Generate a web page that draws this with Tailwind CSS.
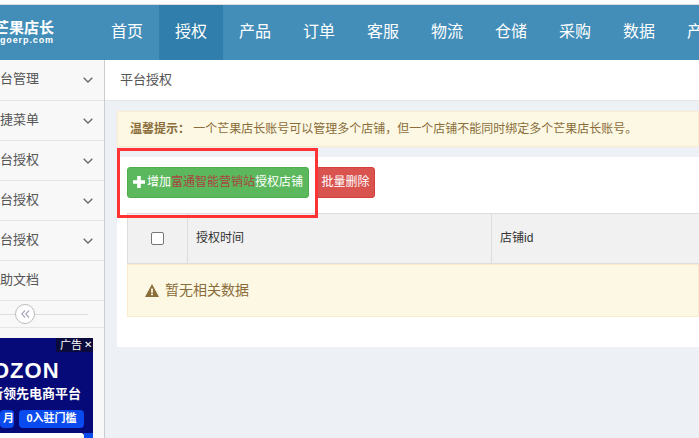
<!DOCTYPE html>
<html lang="zh-CN">
<head>
  <meta charset="UTF-8" />
  <title>平台授权</title>
  <script src="https://cdn.jsdelivr.net/npm/@tailwindcss/browser@4"></script>
</head>
<body class="relative w-[699px] h-[438px] overflow-hidden bg-[#edf0f5] font-['Liberation_Sans','Noto_Sans_CJK_SC',sans-serif] text-[13px] text-[#555]">

  <!-- top strip -->
  <div class="h-[5px] bg-white border-b border-[#ddd]"></div>

  <!-- nav -->
  <header class="flex h-[55px] bg-[#438eb9] text-white">
    <div class="flex flex-col items-end w-[54px] mr-[41px] shrink-0 pt-[14px]">
      <div class="text-[15px] leading-[17px] font-bold whitespace-nowrap">芒果店长</div>
      <div class="text-[9px] leading-[10px] mt-[-1px] font-bold tracking-[0.9px] whitespace-nowrap">mangoerp.com</div>
    </div>
    <nav class="flex text-base leading-[53px] whitespace-nowrap">
      <a class="w-16 h-[55px] text-center">首页</a>
      <a class="w-16 h-[55px] text-center bg-[#307eab]">授权</a>
      <a class="w-16 h-[55px] text-center">产品</a>
      <a class="w-16 h-[55px] text-center">订单</a>
      <a class="w-16 h-[55px] text-center">客服</a>
      <a class="w-16 h-[55px] text-center">物流</a>
      <a class="w-16 h-[55px] text-center">仓储</a>
      <a class="w-16 h-[55px] text-center">采购</a>
      <a class="w-16 h-[55px] text-center">数据</a>
      <a class="w-16 h-[55px] text-center">产品</a>
    </nav>
  </header>

  <div class="flex h-[378px]">
    <!-- sidebar -->
    <aside class="w-[105px] shrink-0 bg-[#f8f8f8] border-r border-[#ccc] overflow-hidden">
      <ul>
        <li class="flex items-center justify-between h-[41px] border-b border-[#e5e5e5] pr-[11px]"><span class="ml-[-13px] mb-[2px]">平台管理</span><svg class="w-[10px] h-[6px]" viewBox="0 0 10 6" fill="none" stroke="#666" stroke-width="1.3"><path d="M.7.7 5 5 9.3.7"/></svg></li>
        <li class="flex items-center justify-between h-10 border-b border-[#e5e5e5] pr-[11px]"><span class="ml-[-13px] mb-[2px]">快捷菜单</span><svg class="w-[10px] h-[6px]" viewBox="0 0 10 6" fill="none" stroke="#666" stroke-width="1.3"><path d="M.7.7 5 5 9.3.7"/></svg></li>
        <li class="flex items-center justify-between h-10 border-b border-[#e5e5e5] pr-[11px]"><span class="ml-[-13px] mb-[2px]">平台授权</span><svg class="w-[10px] h-[6px]" viewBox="0 0 10 6" fill="none" stroke="#666" stroke-width="1.3"><path d="M.7.7 5 5 9.3.7"/></svg></li>
        <li class="flex items-center justify-between h-10 border-b border-[#e5e5e5] pr-[11px]"><span class="ml-[-13px] mb-[2px]">平台授权</span><svg class="w-[10px] h-[6px]" viewBox="0 0 10 6" fill="none" stroke="#666" stroke-width="1.3"><path d="M.7.7 5 5 9.3.7"/></svg></li>
        <li class="flex items-center justify-between h-10 border-b border-[#e5e5e5] pr-[11px]"><span class="ml-[-13px] mb-[2px]">平台授权</span><svg class="w-[10px] h-[6px]" viewBox="0 0 10 6" fill="none" stroke="#666" stroke-width="1.3"><path d="M.7.7 5 5 9.3.7"/></svg></li>
        <li class="flex items-center h-10 border-b border-[#e5e5e5]"><span class="ml-[-13px] mb-[2px]">帮助文档</span></li>
      </ul>
      <!-- collapse -->
      <div class="relative h-[27px] border-b border-[#e5e5e5] pl-[15px] pt-[3px]">
        <div class="absolute left-0 w-[88px] top-[13px] h-px bg-[#ddd]"></div>
        <div class="relative w-5 h-5 rounded-full bg-white border border-[#bbb] flex items-center justify-center">
          <svg class="w-[9px] h-[8px]" viewBox="0 0 9 8" fill="none" stroke="#aab" stroke-width="1.2"><path d="M4 .5.8 4 4 7.5M8 .5 4.8 4 8 7.5"/></svg>
        </div>
      </div>
      <!-- ad -->
      <div class="relative w-[93px] h-[100px] mt-[10px] bg-[#050a78] overflow-hidden text-white">
        <div class="absolute right-0 top-0 flex items-center gap-[2px] h-[14px] pl-[4px] pr-[1px] bg-[#0a0a3c] text-[11px] leading-none"><span>广告</span><span class="text-[10px]">✕</span></div>
        <div class="mt-[22px] ml-[-8px] text-[22px] leading-[22px] font-bold tracking-[1px]">OZON</div>
        <div class="mt-[4px] ml-[-10px] text-[13px] leading-[16px] font-bold whitespace-nowrap">新领先电商平台</div>
        <div class="flex gap-[5px] mt-[8px] text-[11px] leading-[17px] font-bold">
          <span class="w-[14px] h-[18px] rounded-[4px] bg-[#0a4bf0] text-right overflow-hidden">月</span>
          <span class="w-[65px] h-[18px] rounded-[4px] bg-[#0a4bf0] text-center">0入驻门槛</span>
        </div>
        <div class="absolute left-0 bottom-0 w-[84px] h-[5px] bg-white rounded-tr-[3px]"></div>
        <div class="absolute right-0 bottom-0 w-[9px] h-[5px] bg-[#0a4bf0]"></div>
      </div>
    </aside>

    <main class="flex-1 min-w-0">
      <div class="h-[41px] bg-white border-b border-[#e5e5e5] pl-[15px] leading-[39px]">平台授权</div>
      <div class="pl-3">
        <div class="mt-[10px] h-9 bg-[#fcf8e3] border border-[#faebcc] pl-[12px] leading-[34px] text-xs text-[#8a6d3b] whitespace-nowrap"><b>温馨提示：</b><span>&nbsp;一个芒果店长账号可以管理多个店铺，但一个店铺不能同时绑定多个芒果店长账号。</span></div>
        <section class="mt-[10px] h-[190px] bg-white pl-[10px] pt-[10px]">
          <div class="flex gap-[7px] text-white text-xs leading-[26px] whitespace-nowrap">
            <button class="flex items-center gap-[2px] w-[182px] h-[31px] pl-[5px] pb-[1px] bg-[#5cb85c] border border-[#4cae4c] rounded-[3px]">
              <svg class="w-[12px] h-[12px]" viewBox="0 0 12 12" fill="#fff"><path d="M4.200 0h3.600v4.200H12v3.600H7.800V12H4.200V7.800H0V4.200h4.200z"/></svg>
              <span>增加<span class="text-[#a94442]">富通智能营销站</span>授权店铺</span>
            </button>
            <button class="w-[59px] h-[31px] pb-[2px] bg-[#d9534f] border border-[#d43f3a] rounded-[3px]">批量删除</button>
          </div>
          <div class="flex mt-[15px] h-[51px] bg-[#f1f1f1] border-y border-l border-[#ddd] text-[#333] text-xs">
            <div class="flex items-center justify-center w-[60px] border-r border-[#ddd]"><span class="w-[13px] h-[13px] bg-white border border-[#767676] rounded-[2px]"></span></div>
            <div class="flex items-center w-[304px] pl-2 pb-[2px] border-r border-[#ddd]">授权时间</div>
            <div class="flex items-center pl-2 pb-[2px]">店铺id</div>
          </div>
          <div class="flex items-center gap-[6px] h-[53px] bg-[#fcf8e3] border border-[#faebcc] pl-[17px] text-sm text-[#8a6d3b]">
            <svg class="w-[14px] h-[13px]" viewBox="0 0 14 13" fill="#8a6d3b"><path fill-rule="evenodd" d="M7 0 14 13H0zM6.100 4.500v4.200h1.800V4.500zM6.100 9.500v1.800h1.800V9.500z"/></svg>
            <span class="mb-[2px]">暂无相关数据</span>
          </div>
        </section>
      </div>
    </main>
  </div>

  <!-- annotation box -->
  <div class="absolute left-[117px] top-[148px] w-[201px] h-[70px] border-[3px] border-[#f33]"></div>
</body>
</html>
